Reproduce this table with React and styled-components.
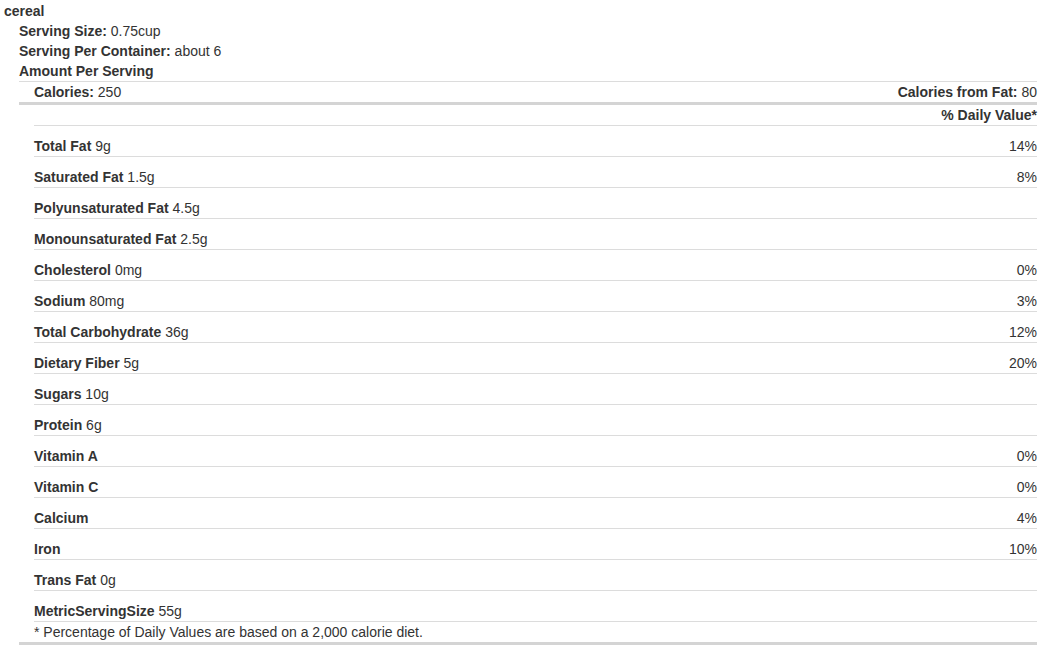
import styled, { createGlobalStyle } from "styled-components"

const nutrients = [
  { name: "Total Fat", amount: "9g", dv: "14%" },
  { name: "Saturated Fat", amount: "1.5g", dv: "8%" },
  { name: "Polyunsaturated Fat", amount: "4.5g", dv: "" },
  { name: "Monounsaturated Fat", amount: "2.5g", dv: "" },
  { name: "Cholesterol", amount: "0mg", dv: "0%" },
  { name: "Sodium", amount: "80mg", dv: "3%" },
  { name: "Total Carbohydrate", amount: "36g", dv: "12%" },
  { name: "Dietary Fiber", amount: "5g", dv: "20%" },
  { name: "Sugars", amount: "10g", dv: "" },
  { name: "Protein", amount: "6g", dv: "" },
  { name: "Vitamin A", amount: "", dv: "0%" },
  { name: "Vitamin C", amount: "", dv: "0%" },
  { name: "Calcium", amount: "", dv: "4%" },
  { name: "Iron", amount: "", dv: "10%" },
  { name: "Trans Fat", amount: "0g", dv: "" },
  { name: "MetricServingSize", amount: "55g", dv: "" },
]

function App() {
  return (
    <>
      <GlobalStyle />
      <Page>
        <Title>cereal</Title>
        <Info>
          <Line><b>Serving Size:</b> 0.75cup</Line>
          <Line><b>Serving Per Container:</b> about 6</Line>
          <Line><b>Amount Per Serving</b></Line>
        </Info>
        <Panel>
          <CaloriesRow>
            <span><b>Calories:</b> 250</span>
            <span><b>Calories from Fat:</b> 80</span>
          </CaloriesRow>
          <List>
            <DailyRow><b>% Daily Value*</b></DailyRow>
            {nutrients.map((n) => (
              <NutrientRow key={n.name}>
                <span><b>{n.name}</b>{n.amount && " " + n.amount}</span>
                <span>{n.dv}</span>
              </NutrientRow>
            ))}
            <Footnote>* Percentage of Daily Values are based on a 2,000 calorie diet.</Footnote>
          </List>
        </Panel>
      </Page>
    </>
  )
}

const GlobalStyle = createGlobalStyle`
  body{
    margin: 0;
    background: #fff;
    font-family: "Liberation Sans", Arial, sans-serif;
    font-size: 14px;
    line-height: 20px;
    color: #333;
  }
  b{
    font-weight: 700;
  }
`

const Page = styled.div`
  padding: 1px 23px 0 4px;
`

const Title = styled.div`
  font-weight: 700;
`

const Info = styled.div`
  padding-left: 15px;
`

const Line = styled.div`
  height: 20px;
`

const Panel = styled.div`
  margin-left: 15px;
  border-top: 1px solid #dcdcdc;
  border-bottom: 3px solid #d4d4d4;
`

const CaloriesRow = styled.div`
  display: flex;
  justify-content: space-between;
  padding-left: 15px;
  border-bottom: 3px solid #d4d4d4;
`

const List = styled.div`
  margin-left: 15px;
`

const DailyRow = styled.div`
  text-align: right;
  border-bottom: 1px solid #dcdcdc;
`

const NutrientRow = styled.div`
  display: flex;
  justify-content: space-between;
  padding-top: 10px;
  border-bottom: 1px solid #dcdcdc;
`

const Footnote = styled.div`
  height: 20px;
`

export default App
